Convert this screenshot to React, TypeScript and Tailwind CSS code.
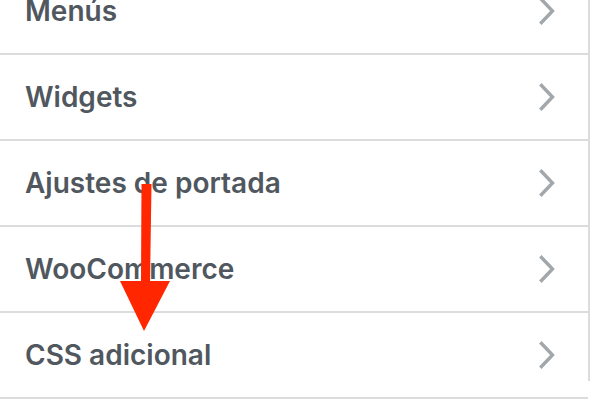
import React from "react";

const items = ["Menús", "Widgets", "Ajustes de portada", "WooCommerce", "CSS adicional"];

function Chevron() {
  return (
    <svg width="16" height="28" viewBox="0 0 16 28" className="shrink-0">
      <polyline
        points="2.5,2.5 13.5,14 2.5,25.5"
        fill="none"
        stroke="#a2a7ab"
        strokeWidth="3.4"
        strokeLinecap="square"
        strokeLinejoin="miter"
      />
    </svg>
  );
}

export default function App() {
  return (
    <div className="relative w-[594px] h-[412px] overflow-hidden bg-white">
      <div className="w-[590px] h-[412px] border-r-2 border-[#dcdcde]">
        <div className="-mt-[31px] flex flex-col">
          {items.map((t) => (
            <div
              key={t}
              className="h-[86px] border-b-2 border-[#dcdcde] flex items-center justify-between pl-[25px] pr-[33px]"
            >
              <span
                className="text-[28px] leading-[32px] font-semibold text-[#50575e]"
                style={{ fontFamily: "Inter, 'Noto Sans', sans-serif" }}
              >
                {t}
              </span>
              <Chevron />
            </div>
          ))}
        </div>
      </div>
      <svg
        className="absolute left-0 top-0 pointer-events-none"
        width="594"
        height="412"
        viewBox="0 0 594 412"
      >
        <polygon points="141.5,184 151.5,184 150,283 141,283" fill="#ff2600" />
        <polygon points="120,281 170,281 144,331" fill="#ff2600" />
      </svg>
    </div>
  );
}
